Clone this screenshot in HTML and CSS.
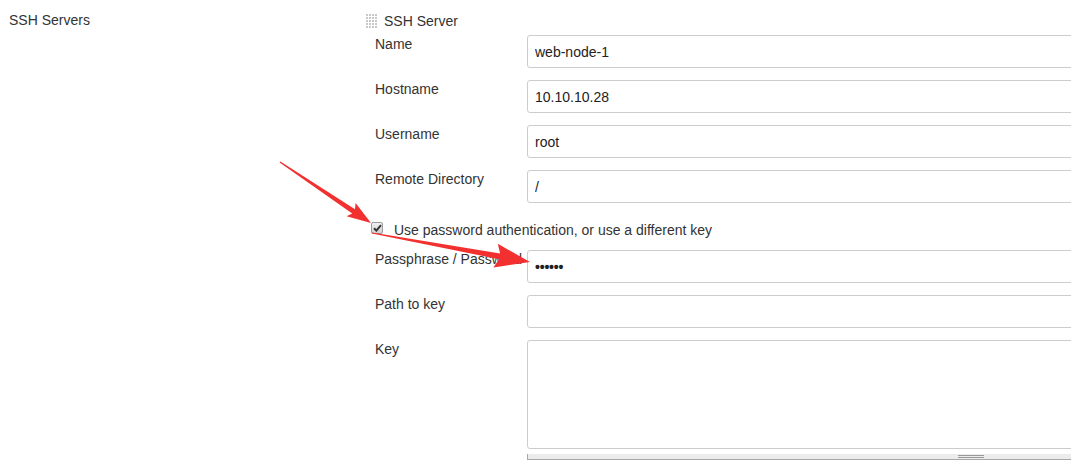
FILE: index.html
```html
<!DOCTYPE html>
<html lang="en">
<head>
<meta charset="utf-8">
<title>SSH Servers</title>
<link rel="stylesheet" href="styles.css">
</head>
<body>
<div class="page">
  <div class="section-label">SSH Servers</div>
  <div class="repeat">
    <div class="repeat-head">
      <svg class="grip" width="11" height="14" viewBox="0 0 11 14" aria-hidden="true">
        <defs>
          <pattern id="dots" width="3" height="3" patternUnits="userSpaceOnUse">
            <rect x="0" y="0" width="2" height="2" fill="#c9c9c9"/>
          </pattern>
        </defs>
        <rect x="0" y="0" width="11" height="14" fill="url(#dots)"/>
      </svg>
      <span class="repeat-title">SSH Server</span>
    </div>
    <div class="form">
      <label class="label">Name</label>
      <input class="input" type="text" value="web-node-1">
      <label class="label">Hostname</label>
      <input class="input" type="text" value="10.10.10.28">
      <label class="label">Username</label>
      <input class="input" type="text" value="root">
      <label class="label">Remote Directory</label>
      <input class="input" type="text" value="/">
      <div class="check-row">
        <span class="checkbox">
          <svg width="9" height="8" viewBox="0 0 9 8" aria-hidden="true"><path d="M1 4.2 L3.4 6.6 L8 1.2" fill="none" stroke="#333" stroke-width="2"/></svg>
        </span>
        <span class="check-text">Use password authentication, or use a different key</span>
      </div>
      <label class="label">Passphrase / Password</label>
      <input class="input pass" type="text" value="••••••">
      <label class="label">Path to key</label>
      <input class="input" type="text" value="">
      <label class="label">Key</label>
      <div class="key-wrap">
        <textarea class="textarea"></textarea>
        <div class="resize-bar"><span class="handle"></span></div>
      </div>
    </div>
  </div>
</div>
<svg class="arrows" width="1071" height="465" viewBox="0 0 1071 465" aria-hidden="true">
  <polygon fill="#f2302f" points="279.6,162.4 352.2,213.4 346.6,216.2 371,223 355.6,203.0 355.0,209.2 280.4,161.6"/>
  <polygon fill="#f2302f" points="371.9,233.6 499.0,259.2 493.4,267.4 530,262 497.8,243.8 500.1,253.4 372.1,232.4"/>
</svg>
</body>
</html>
```

FILE: styles.css
```css
html, body {
  margin: 0;
  padding: 0;
  overflow: hidden;
  background: #fff;
}

body {
  font-family: "Liberation Sans", Arial, sans-serif;
  font-size: 14px;
  line-height: 16px;
  color: #333;
  position: relative;
  width: 1071px;
  height: 465px;
}

.page {
  display: flex;
  align-items: flex-start;
}

.section-label {
  width: 357px;
  padding: 12px 0 0 9px;
  flex: none;
}

.repeat {
  flex: 1;
  min-width: 0;
  margin-right: -30px;
}

.repeat-head {
  display: flex;
  align-items: flex-start;
  padding-top: 13px;
  height: 22px;
}

.grip {
  display: block;
  margin-top: 1px;
  flex: none;
}

.repeat-title {
  margin-left: 7px;
}

.form {
  display: grid;
  grid-template-columns: 152px 1fr;
  row-gap: 12px;
  padding-left: 9px;
}

.label {
  padding-top: 1px;
  white-space: nowrap;
}

.input {
  box-sizing: border-box;
  height: 33px;
  width: 100%;
  margin: 0;
  padding: 0 7px;
  border: 1px solid #ccc;
  border-radius: 3px;
  font-family: "Liberation Sans", Arial, sans-serif;
  font-size: 14px;
  color: #222;
  background: #fff;
  outline: none;
}

.pass {
  letter-spacing: -0.2px;
  font-weight: bold;
}

.check-row {
  grid-column: 1 / 3;
  display: flex;
  align-items: flex-start;
  height: 23px;
  box-sizing: border-box;
  padding-top: 7px;
  margin-left: -4px;
}

.checkbox {
  box-sizing: border-box;
  width: 12px;
  height: 12px;
  border: 1px solid #9a9a9a;
  border-radius: 2px;
  background: linear-gradient(#f2f2f2, #cfcfcf);
  display: flex;
  align-items: center;
  justify-content: center;
  flex: none;
}

.check-text {
  margin-left: 11px;
}

.key-wrap {
  display: flex;
  flex-direction: column;
}

.textarea {
  box-sizing: border-box;
  display: block;
  height: 109px;
  width: 100%;
  margin: 0;
  border: 1px solid #ccc;
  border-radius: 3px;
  resize: none;
  background: #fff;
  outline: none;
}

.resize-bar {
  margin-top: 5px;
  height: 5px;
  background: #ececec;
  border-left: 1px solid #a8a8a8;
  border-bottom: 1px solid #a8a8a8;
  position: relative;
}

.handle {
  position: absolute;
  left: 430px;
  top: 1px;
  width: 26px;
  height: 1px;
  border-top: 1px solid #999;
  border-bottom: 1px solid #999;
}

.arrows {
  position: absolute;
  left: 0;
  top: 0;
  pointer-events: none;
}
```
